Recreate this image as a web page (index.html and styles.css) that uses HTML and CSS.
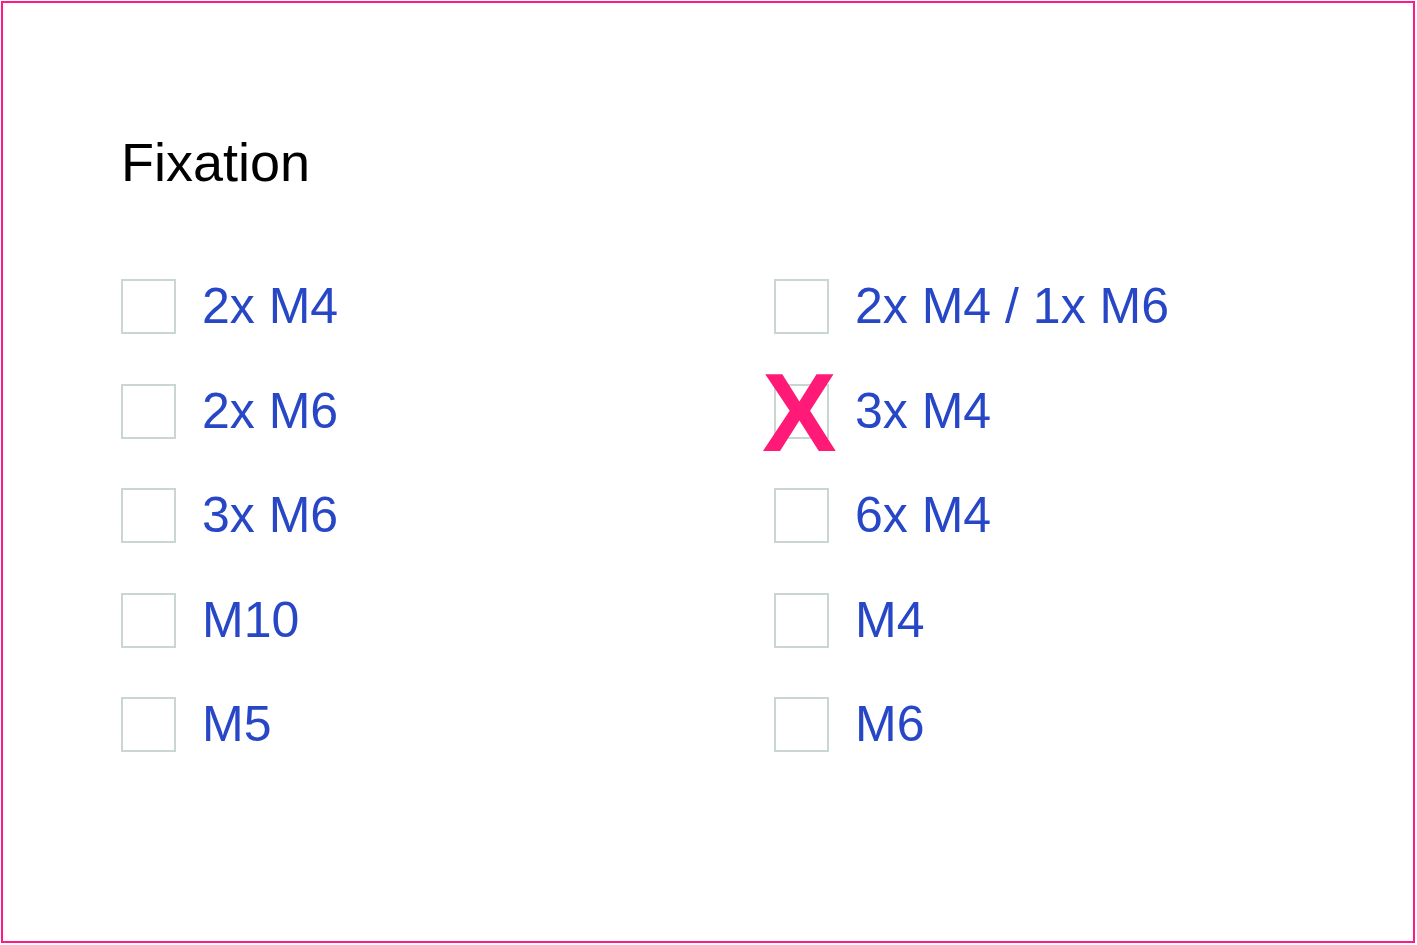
FILE: index.html
```html
<!DOCTYPE html>
<html lang="en">
<head>
<meta charset="utf-8">
<title>Fixation</title>
<link rel="stylesheet" href="styles.css">
</head>
<body>
<div class="frame">
  <h1 class="title">Fixation</h1>
  <div class="options">
    <label class="option"><span class="box"></span><span class="text">2x M4</span></label>
    <label class="option"><span class="box"></span><span class="text">2x M4 / 1x M6</span></label>
    <label class="option"><span class="box"></span><span class="text">2x M6</span></label>
    <label class="option"><span class="box marked"><span class="mark">X</span></span><span class="text">3x M4</span></label>
    <label class="option"><span class="box"></span><span class="text">3x M6</span></label>
    <label class="option"><span class="box"></span><span class="text">6x M4</span></label>
    <label class="option"><span class="box"></span><span class="text">M10</span></label>
    <label class="option"><span class="box"></span><span class="text">M4</span></label>
    <label class="option"><span class="box"></span><span class="text">M5</span></label>
    <label class="option"><span class="box"></span><span class="text">M6</span></label>
  </div>
</div>
</body>
</html>
```
FILE: styles.css
```css
html, body {
  margin: 0;
  padding: 0;
  background: #ffffff;
}
body {
  font-family: "Liberation Sans", Arial, sans-serif;
}
.frame {
  box-sizing: border-box;
  margin: 1px;
  width: 1414px;
  height: 942px;
  border: 2px solid #ff1a8c;
  padding: 129px 0 0 118px;
}
.title {
  margin: 0;
  font-size: 54px;
  line-height: 60px;
  font-weight: normal;
  color: #000000;
}
.options {
  margin-top: 87px;
  display: grid;
  grid-template-columns: 653px 1fr;
  grid-auto-rows: 104.5px;
  align-items: start;
}
.option {
  display: flex;
  align-items: center;
  gap: 26px;
}
.box {
  position: relative;
  box-sizing: border-box;
  width: 55px;
  height: 55px;
  border: 2px solid #c9d6d4;
  background: #ffffff;
  flex: none;
}
.mark {
  position: absolute;
  left: -14px;
  top: -29px;
  font-size: 112px;
  line-height: 112px;
  font-weight: bold;
  color: #ff1a78;
}
.text {
  font-size: 50px;
  line-height: 55px;
  color: #2747c6;
  white-space: nowrap;
}
```
